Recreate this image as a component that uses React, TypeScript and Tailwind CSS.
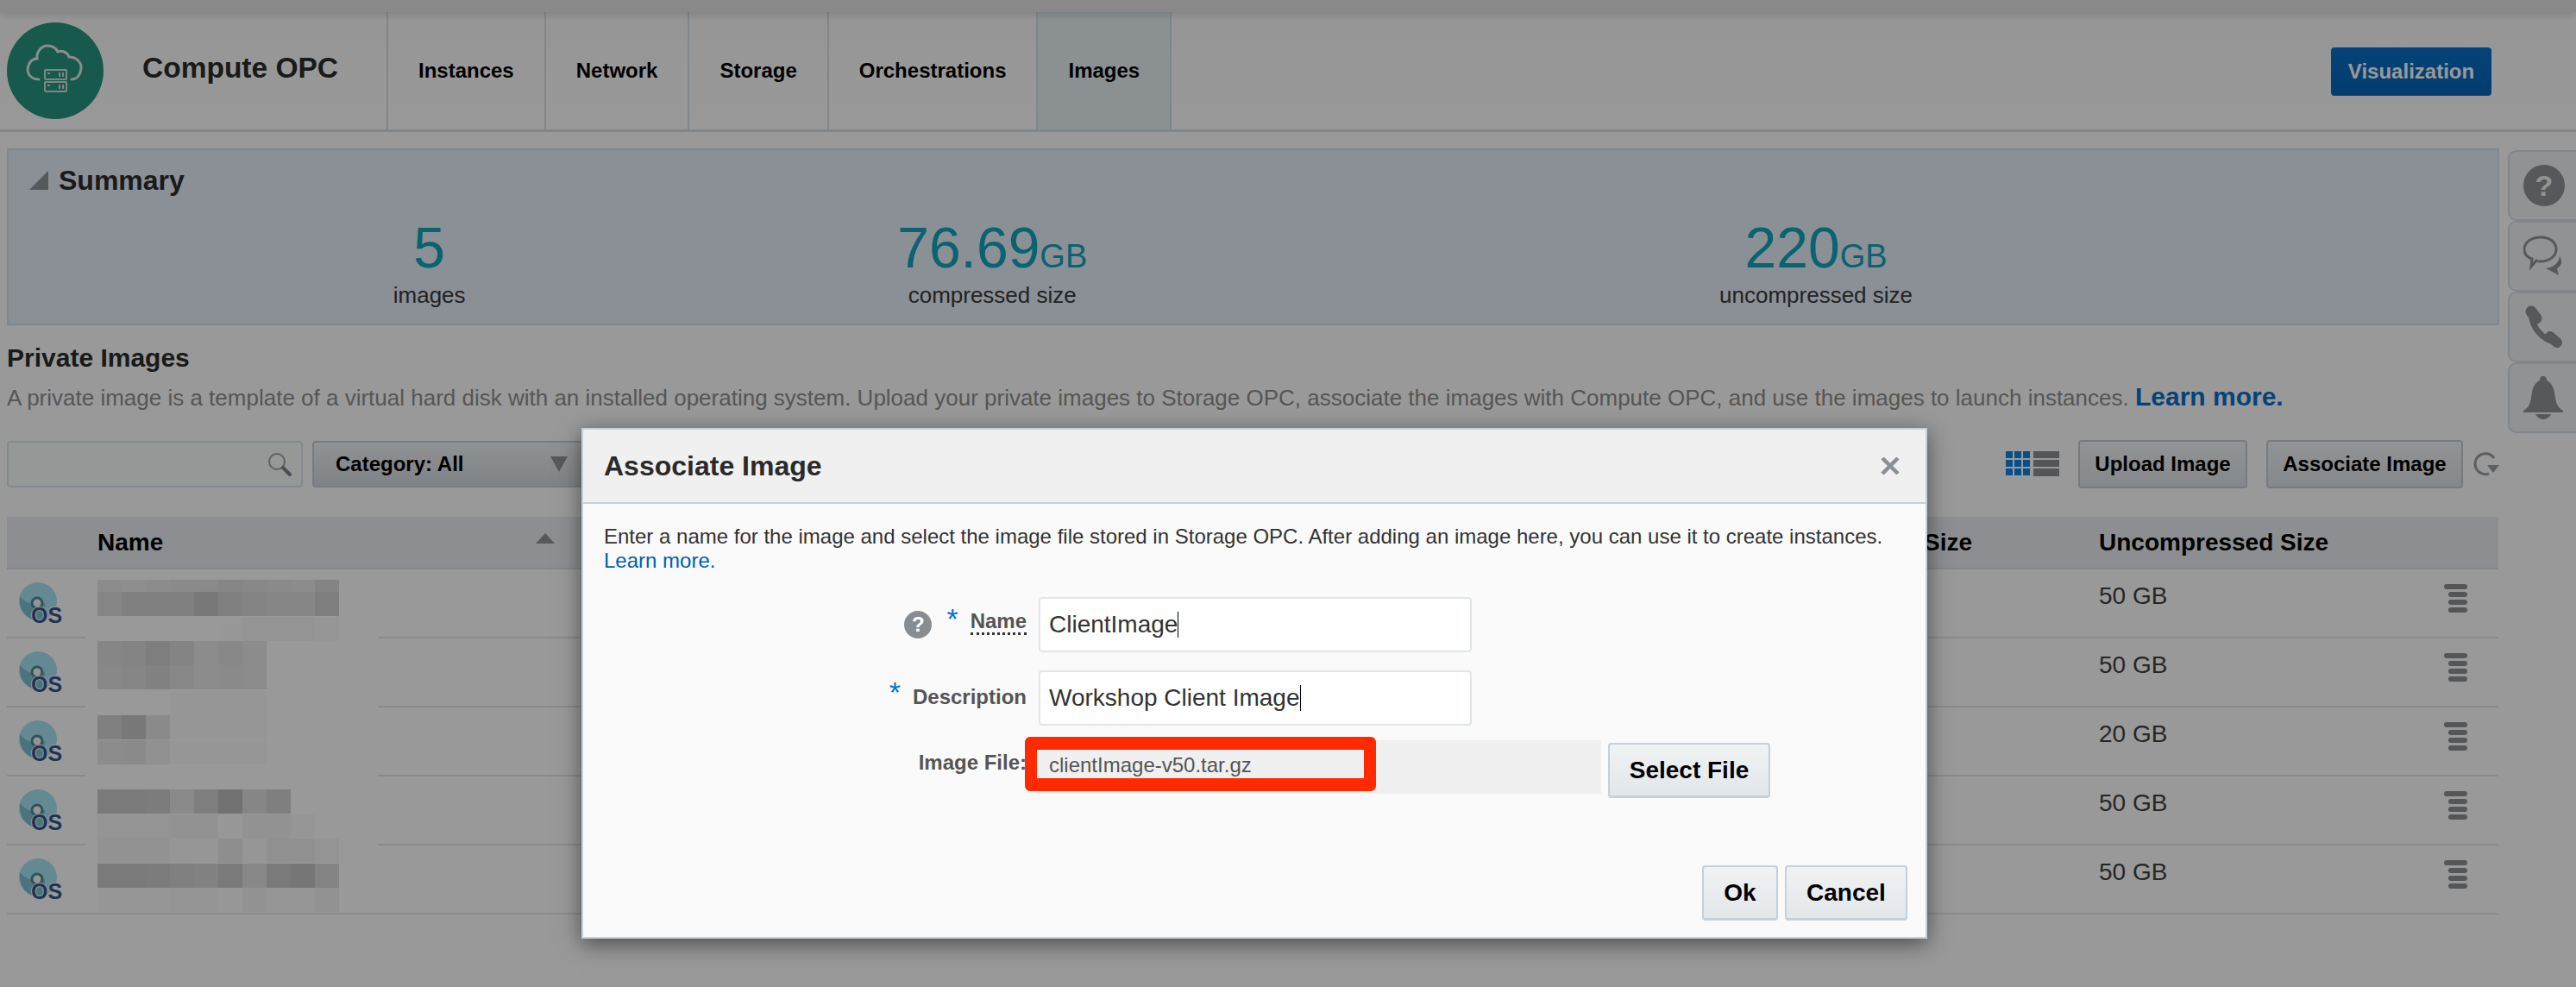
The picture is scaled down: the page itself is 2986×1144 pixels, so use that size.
const FONT = { fontFamily: '"Liberation Sans", Arial, sans-serif' };

const tabs = ["Instances", "Network", "Storage", "Orchestrations", "Images"];

const stats = [
  { value: "5", unit: "", label: "images", width: "w-[976px]" },
  { value: "76.69", unit: "GB", label: "compressed size", width: "w-[330px]" },
  { value: "220", unit: "GB", label: "uncompressed size", width: "w-[1581px]" },
];

const sizes = ["50 GB", "50 GB", "20 GB", "50 GB", "50 GB"];

// the blurred image names, strips of grey blocks. values are as seen through the dimmer
const mosaic: { y: number; cells: number[] }[] = [
  { y: 672, cells: [140, 142, 140, 138, 138, 134, 136, 138, 140, 132] },
  { y: 686, cells: [133, 128, 128, 128, 120, 128, 132, 134, 134, 126] },
  { y: 715, cells: [158, 158, 158, 156, 154, 152, 148, 148, 148, 150] },
  { y: 743, cells: [134, 132, 126, 132, 140, 136, 140] },
  { y: 771, cells: [136, 134, 130, 136, 140, 138, 140] },
  { y: 801, cells: [156, 158, 156, 150, 150, 150, 150] },
  { y: 829, cells: [128, 120, 138, 150, 150, 150, 150] },
  { y: 858, cells: [140, 138, 144, 150, 150, 150, 150] },
  { y: 915, cells: [122, 122, 124, 138, 126, 114, 134, 127] },
  { y: 944, cells: [148, 148, 148, 146, 146, 152, 146, 146, 150] },
  { y: 972, cells: [146, 146, 146, 150, 150, 142, 150, 144, 144, 148] },
  { y: 1001, cells: [122, 122, 124, 128, 130, 122, 136, 122, 118, 132, 158] },
  { y: 1029, cells: [150, 150, 150, 148, 148, 152, 146, 150, 150, 146] },
];

function Logo() {
  return (
    <svg viewBox="0 0 112 112" className="w-[112px] h-[112px] shrink-0">
      <circle cx="56" cy="56" r="56" fill="#279480" />
      <path
        d="M37 66 C27 66 22 58 25 50 C27 44 31 42 35 42 C34 34 40 27 47 27 C53 27 57 30 59 34 C63 32 70 34 72 40 C80 40 87 46 86 54 C85 61 81 66 75 66"
        fill="none"
        stroke="#e4ecea"
        strokeWidth="3"
        strokeLinecap="round"
      />
      <g fill="none" stroke="#d5e0dd" strokeWidth="2">
        <rect x="44" y="55" width="25" height="11" rx="1" />
        <rect x="44" y="69" width="25" height="11" rx="1" />
      </g>
      <g fill="#d5e0dd">
        <rect x="47" y="58" width="3" height="2" />
        <rect x="60" y="58" width="2" height="5" />
        <rect x="64" y="58" width="2" height="5" />
        <rect x="47" y="72" width="3" height="2" />
        <rect x="60" y="72" width="2" height="5" />
        <rect x="64" y="72" width="2" height="5" />
      </g>
    </svg>
  );
}

function OsIcon() {
  return (
    <svg viewBox="0 0 56 56" className="w-[56px] h-[56px]">
      <circle cx="22" cy="22" r="22" fill="#a8e4f4" />
      <path d="M1 16 C8 24 16 28 30 24 L30 46 L18 44 C6 40 0 30 1 16 Z" fill="#7cc0d2" />
      <circle cx="21" cy="24" r="6" fill="#f4f8f8" stroke="#4f8a98" strokeWidth="3" />
      <text
        x="14"
        y="47"
        fontSize="25"
        fontWeight="700"
        fill="#34558e"
        stroke="#ffffff"
        strokeWidth="2"
        style={{ ...FONT, paintOrder: "stroke" }}
      >
        OS
      </text>
    </svg>
  );
}

function RowMenu() {
  return (
    <div className="flex flex-col items-end gap-[3px] w-[27px]">
      <div className="w-[27px] h-[6px] rounded-[3px] bg-[#8c8f93]" />
      <div className="w-[22px] h-[6px] rounded-[3px] bg-[#8c8f93]" />
      <div className="w-[22px] h-[6px] rounded-[3px] bg-[#8c8f93]" />
      <div className="w-[22px] h-[6px] rounded-[3px] bg-[#8c8f93]" />
    </div>
  );
}

function ViewToggle() {
  return (
    <svg viewBox="0 0 62 30" className="w-[62px] h-[30px]">
      <g fill="#0e84e6">
        {[0, 10, 20].map((y) =>
          [0, 10, 20].map((x) => <rect key={`${x}-${y}`} x={x} y={y} width="8" height="8" />)
        )}
      </g>
      <g fill="#8a8f94">
        <rect x="32" y="0" width="30" height="8" />
        <rect x="32" y="10" width="30" height="8" />
        <rect x="32" y="20" width="30" height="9" />
      </g>
    </svg>
  );
}

function ToolbarButton({ label, width }: { label: string; width: string }) {
  return (
    <button
      type="button"
      className={`${width} h-[56px] rounded-[4px] border-2 border-[#c6ced6] bg-gradient-to-b from-[#f2f5f7] to-[#dfe4e8] text-[24px] font-bold text-black`}
    >
      {label}
    </button>
  );
}

function DialogButton({ label, width }: { label: string; width: string }) {
  return (
    <button
      type="button"
      className={`${width} h-[64px] rounded-[4px] border-2 border-[#c4d0da] border-b-[3px] bg-gradient-to-b from-[#f0f2f3] to-[#e3e7ea] text-[28px] font-bold text-black`}
    >
      {label}
    </button>
  );
}

function SideTab({ children }: { children: React.ReactNode }) {
  return (
    <div className="h-[82px] flex items-center pl-[16px] rounded-l-[10px] border-2 border-r-0 border-[#d5e0e8] bg-[#f2f4f6]">
      {children}
    </div>
  );
}

export default function App() {
  return (
    <div style={FONT} className="relative w-[2986px] h-[1144px] overflow-hidden bg-white text-[#333]">
      <div className="relative z-10 h-[14px] bg-[#e4e4e4] shadow-[0_4px_8px_rgba(0,0,0,0.12)]" />

      <header className="h-[139px] flex border-b-[3px] border-[#d5dfe7] bg-gradient-to-b from-[#fafafa] to-white">
        <div className="w-[448px] flex items-center pl-[8px]">
          <Logo />
          <div className="ml-[45px] mb-[6px] text-[33.5px] font-bold text-[#2c2c2c]">Compute OPC</div>
        </div>
        {tabs.map((tab) => (
          <div
            key={tab}
            className={`flex items-center px-[35px] border-l-2 text-[24px] font-bold text-black ${
              tab === "Images" ? "bg-[#e8f0f5] border-[#d5dfe7] border-r-2" : "border-[#d5dfe7]"
            }`}
          >
            {tab}
          </div>
        ))}
        <div className="ml-auto mr-[98px] mt-[41px] w-[186px] h-[56px] flex items-center justify-center rounded-[4px] bg-gradient-to-b from-[#0770c8] to-[#0766b8] text-[24px] font-bold text-white">
          Visualization
        </div>
      </header>

      <div className="flex">
        <main className="w-[2897px] pl-[8px] pt-[19px]">
          <section className="h-[205px] w-[2889px] border-2 border-[#d6e2ee] bg-[#e8eefa]">
            <div className="flex items-center pl-[24px] pt-[12px] h-[58px]">
              <svg viewBox="0 0 22 22" className="w-[22px] h-[22px]">
                <polygon points="22,0 22,22 0,22" fill="#8f9499" />
              </svg>
              <span className="ml-[12px] text-[32px] font-bold text-[#2c2c2c]">Summary</span>
            </div>
            <div className="flex mt-[15px]">
              {stats.map((stat) => (
                <div key={stat.label} className={`${stat.width} flex flex-col items-center`}>
                  <div className="h-[80px] leading-[80px] text-[66px] text-[#10a5bb]">
                    {stat.value}
                    <span className="text-[38px]">{stat.unit}</span>
                  </div>
                  <div className="text-[26px] leading-[30px] text-[#3a3a3a]">{stat.label}</div>
                </div>
              ))}
            </div>
          </section>

          <h2 className="mt-[20px] text-[30px] leading-[36px] font-bold text-[#2c2c2c]">Private Images</h2>
          <p className="mt-[9px] whitespace-nowrap text-[26px] leading-[36px] text-[#909090]">
            A private image is a template of a virtual hard disk with an installed operating system. Upload your
            private images to Storage OPC, associate the images with Compute OPC, and use the images to launch
            instances. <span className="text-[30px] font-bold text-[#086ecc]">Learn more.</span>
          </p>

          <div className="mt-[31px] h-[56px] flex items-center">
            <div className="w-[343px] h-[54px] flex items-center justify-end pr-[11px] rounded-[4px] border-2 border-[#dae6ee] bg-[#fbfdfc]">
              <svg viewBox="0 0 28 28" className="w-[28px] h-[28px]">
                <circle cx="11" cy="11" r="9" fill="none" stroke="#9aa0a5" strokeWidth="2" />
                <line x1="18" y1="18" x2="26" y2="26" stroke="#7d8489" strokeWidth="4" strokeLinecap="round" />
              </svg>
            </div>
            <div className="ml-[11px] w-[340px] h-[54px] flex items-center justify-between pl-[25px] pr-[42px] rounded-[4px] border-2 border-[#c6ced6] bg-gradient-to-b from-[#f0f3f5] to-[#d5dadf] text-[24px] font-bold text-black">
              Category: All
              <svg viewBox="0 0 20 18" className="w-[20px] h-[18px]">
                <polygon points="0,0 20,0 10,18" fill="#8f9499" />
              </svg>
            </div>
            <div className="ml-auto flex items-center">
              <ViewToggle />
              <div className="w-[22px]" />
              <ToolbarButton label="Upload Image" width="w-[196px]" />
              <div className="w-[22px]" />
              <ToolbarButton label="Associate Image" width="w-[228px]" />
              <svg viewBox="0 0 32 32" className="ml-[10px] w-[32px] h-[32px] shrink-0">
                <path d="M26 9 A12 12 0 1 0 20 27" fill="none" stroke="#9aa0a5" strokeWidth="3" />
                <polygon points="18,17 32,17 25,26" fill="#9aa0a5" />
              </svg>
            </div>
          </div>

          <div className="mt-[33px] w-[2888px] h-[61px] flex items-center border-b-2 border-[#dbe0e5] bg-[#e9edf2] text-[28px] font-bold text-black">
            <div className="w-[105px]" />
            <div className="w-[532px] flex justify-between pr-[2px]">
              Name
              <svg viewBox="0 0 22 12" className="w-[22px] h-[12px] mt-[10px]">
                <polygon points="11,0 22,12 0,12" fill="#8f9499" />
              </svg>
            </div>
            <div className="w-[1641px] text-right">Compressed Size</div>
            <div className="ml-[147px]">Uncompressed Size</div>
          </div>

          {sizes.map((size, i) => (
            <div key={i} className="w-[2888px] h-[80px] flex border-b-2 border-[#e6e6e6]">
              <div className="w-[105px] pl-[14px] pt-[15px]">
                <OsIcon />
              </div>
              <div className="ml-[2320px] w-[400px] pt-[13px] text-[28px] leading-[36px] text-[#404040]">{size}</div>
              <div className="pt-[17px]">
                <RowMenu />
              </div>
            </div>
          ))}
        </main>

        <aside className="flex-1 pl-[10px] pt-[21px]">
          <SideTab>
            <svg viewBox="0 0 48 48" className="w-[48px] h-[48px]">
              <circle cx="24" cy="24" r="24" fill="#8f9499" />
              <text x="24" y="36" textAnchor="middle" fontSize="34" fontWeight="700" fill="#f4f4f4" style={FONT}>
                ?
              </text>
            </svg>
          </SideTab>
          <SideTab>
            <svg viewBox="0 0 48 48" className="w-[48px] h-[48px]">
              <path d="M42 24 C46 30 44 36 39 38 L41 46 L26 38 C34 37 41 33 42 24 Z" fill="#8f9499" />
              <path
                d="M20 2 C31 2 38 8 38 16 C38 25 29 30 19 30 C17 30 16 30 15 29 L9 36 L10 27 C4 25 1 21 1 16 C1 8 9 2 20 2 Z"
                fill="none"
                stroke="#8f9499"
                strokeWidth="3"
              />
            </svg>
          </SideTab>
          <SideTab>
            <svg viewBox="0 0 48 50" className="w-[48px] h-[50px]">
              <path d="M10 14 C11 26 22 38 34 42" fill="none" stroke="#8f9499" strokeWidth="7" />
              <path d="M9 7 L15 15" stroke="#8f9499" strokeWidth="13" strokeLinecap="round" />
              <path d="M31 36 L39 43" stroke="#8f9499" strokeWidth="12" strokeLinecap="round" />
            </svg>
          </SideTab>
          <SideTab>
            <svg viewBox="0 0 46 50" className="w-[46px] h-[50px]">
              <path d="M23 0 C26 0 27 2 27 5 C34 8 36 16 37 25 C38 33 41 37 46 40 L46 42 L0 42 L0 40 C5 37 8 33 9 25 C10 16 12 8 19 5 C19 2 20 0 23 0 Z" fill="#8f9499" />
              <path d="M14 44 L32 44 C30 48 26 50 23 50 C20 50 16 48 14 44 Z" fill="#8f9499" />
            </svg>
          </SideTab>
        </aside>
      </div>

      {/* pixelated names sit over the rows */}
      <div className="absolute left-[99px] top-[672px] w-[339px] h-[386px] bg-white" />
      <div className="absolute left-[113px] top-0">
        {mosaic.map((strip) => (
          <div key={strip.y} className="absolute left-0 flex h-[28px]" style={{ top: strip.y }}>
            {strip.cells.map((v, i) => {
              const c = Math.round(v / 0.6);
              return <div key={i} className="w-[28px] h-full shrink-0" style={{ background: `rgb(${c},${c},${c})` }} />;
            })}
          </div>
        ))}
      </div>

      <div className="absolute inset-0 z-20 bg-black/40" />

      <div className="absolute z-30 left-[674px] top-[496px] w-[1560px] h-[592px] flex flex-col border-2 border-[#c4d0da] bg-[#fafafa] shadow-[0_6px_24px_rgba(0,0,0,0.5)]">
        <div className="h-[86px] shrink-0 flex items-center justify-between pl-[24px] pr-[30px] border-b-2 border-[#c4d0da] bg-[#f0f0f0]">
          <span className="text-[32px] font-bold text-[#2a2a2a]">Associate Image</span>
          <svg viewBox="0 0 22 20" className="w-[22px] h-[20px]">
            <path d="M2 1 L20 19 M20 1 L2 19" stroke="#8a9095" strokeWidth="4.5" />
          </svg>
        </div>
        <div className="flex-1 flex flex-col px-[24px] pt-[24px]">
          <p className="text-[24px] leading-[28px] text-[#333]">
            Enter a name for the image and select the image file stored in Storage OPC. After adding an image here, you
            can use it to create instances.
            <br />
            <span className="text-[#0060b0]">Learn more.</span>
          </p>

          <div className="mt-[28px] ml-[-24px] flex flex-col">
            <div className="flex items-center h-[64px]">
              <div className="w-[528px] flex items-start justify-end pr-[14px]">
                <div className="w-[32px] h-[32px] rounded-full bg-[#888d92] text-white text-[24px] font-bold flex items-center justify-center">?</div>
                <span className="ml-[17px] mt-[-3px] text-[#0572ce] text-[34px] leading-[24px]">*</span>
                <span className="ml-[14px] mt-[-1px] text-[24px] leading-[26px] font-bold text-[#555] border-b-[3px] border-dotted border-[#333]">Name</span>
              </div>
              <div className="w-[502px] h-[64px] flex items-center pl-[10px] rounded-[4px] border-2 border-[#e1e6e9] bg-white text-[28px] text-[#333]">
                ClientImage
                <span className="w-px h-[30px] bg-black" />
              </div>
            </div>
            <div className="flex items-center h-[64px] mt-[21px]">
              <div className="w-[528px] flex items-start justify-end pr-[14px]">
                <span className="mt-[-7px] text-[#0572ce] text-[34px] leading-[24px]">*</span>
                <span className="ml-[14px] mt-[-3px] text-[24px] leading-[28px] font-bold text-[#555]">Description</span>
              </div>
              <div className="w-[502px] h-[64px] flex items-center pl-[10px] rounded-[4px] border-2 border-[#e1e6e9] bg-white text-[28px] text-[#333]">
                Workshop Client Image
                <span className="w-px h-[30px] bg-black" />
              </div>
            </div>
            <div className="flex mt-[17px]">
              <div className="w-[526px] pt-[12px] pr-[12px] text-right text-[24px] leading-[28px] font-bold text-[#555]">Image File:</div>
              <div className="relative w-[654px] h-[62px] pl-[14px] pt-[12px] bg-[#f0f0f0] text-[24px] leading-[34px] text-[#555]">
                clientImage-v50.tar.gz
                <div className="absolute left-[-14px] top-[-4px] w-[407px] h-[63px] rounded-[6px] border-x-[14px] border-y-[15px] border-[#ff2a00]" />
              </div>
              <div className="ml-[8px] mt-[3px]">
                <DialogButton label="Select File" width="w-[188px]" />
              </div>
            </div>
          </div>

          <div className="mt-[78px] flex justify-end gap-[8px] mr-[-3px]">
            <DialogButton label="Ok" width="w-[88px]" />
            <DialogButton label="Cancel" width="w-[142px]" />
          </div>
        </div>
      </div>
    </div>
  );
}
